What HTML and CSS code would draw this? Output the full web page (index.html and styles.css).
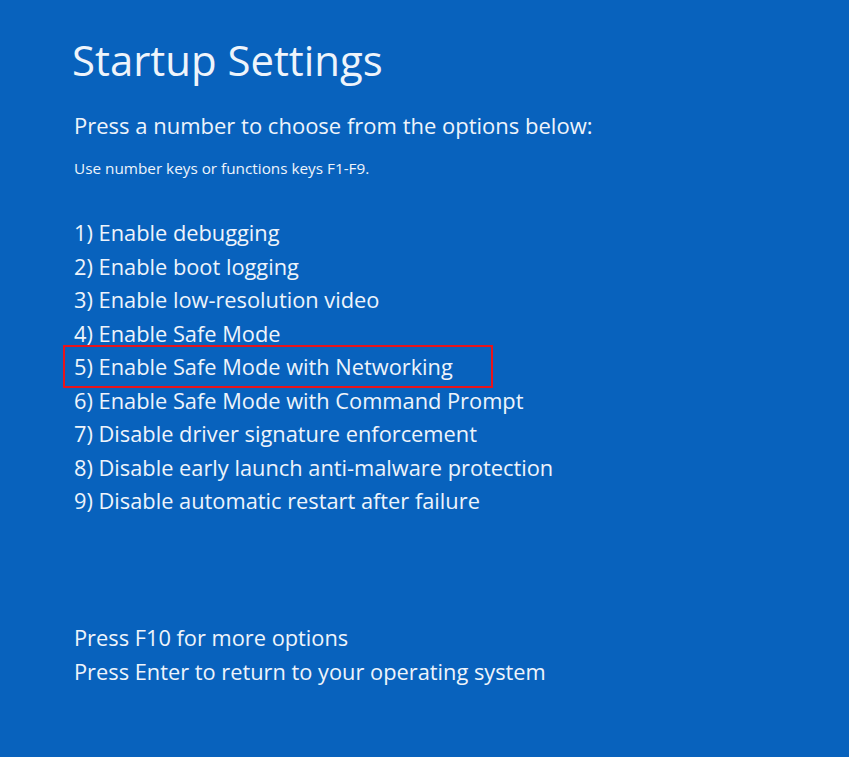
FILE: index.html
```html
<!DOCTYPE html>
<html>
<head>
<meta charset="utf-8">
<link rel="stylesheet" href="styles.css">
</head>
<body>
<main class="screen">
  <h1 class="title">Startup Settings</h1>
  <p class="lead">Press a number to choose from the options below:</p>
  <p class="hint">Use number keys or functions keys F1-F9.</p>
  <ul class="options">
    <li class="option">1) Enable debugging</li>
    <li class="option">2) Enable boot logging</li>
    <li class="option">3) Enable low-resolution video</li>
    <li class="option">4) Enable Safe Mode</li>
    <li class="option selected">5) Enable Safe Mode with Networking</li>
    <li class="option">6) Enable Safe Mode with Command Prompt</li>
    <li class="option">7) Disable driver signature enforcement</li>
    <li class="option">8) Disable early launch anti-malware protection</li>
    <li class="option">9) Disable automatic restart after failure</li>
  </ul>
  <div class="footer">
    <p class="foot-line">Press F10 for more options</p>
    <p class="foot-line">Press Enter to return to your operating system</p>
  </div>
</main>
</body>
</html>
```

FILE: styles.css
```css
html, body {
  margin: 0;
  padding: 0;
  background: #0862bd;
}
body {
  width: 849px;
  height: 757px;
  overflow: hidden;
  font-family: "Open Sans", "Noto Sans", sans-serif;
  color: #eef4fb;
}
.screen {
  padding: 36px 0 0 72px;
}
.title {
  margin: 0;
  font-size: 41.9px;
  line-height: 48px;
  font-weight: 400;
}
.lead {
  margin: 26px 0 0 2px;
  font-size: 22px;
  line-height: 30px;
}
.hint {
  margin: 18px 0 0 2px;
  font-size: 15.3px;
  line-height: 20px;
}
.options {
  list-style: none;
  margin: 38px 0 0 2px;
  padding: 0;
}
.option {
  font-size: 21.8px;
  line-height: 33.5px;
  height: 33.5px;
}
.selected {
  position: relative;
}
.selected::after {
  content: "";
  position: absolute;
  left: -11px;
  top: -5px;
  width: 430px;
  height: 43px;
  box-sizing: border-box;
  border: 2px solid #e8141b;
}
.footer {
  margin-top: 103px;
  margin-left: 2px;
}
.foot-line {
  margin: 0;
  font-size: 21.8px;
  line-height: 34px;
}
```
